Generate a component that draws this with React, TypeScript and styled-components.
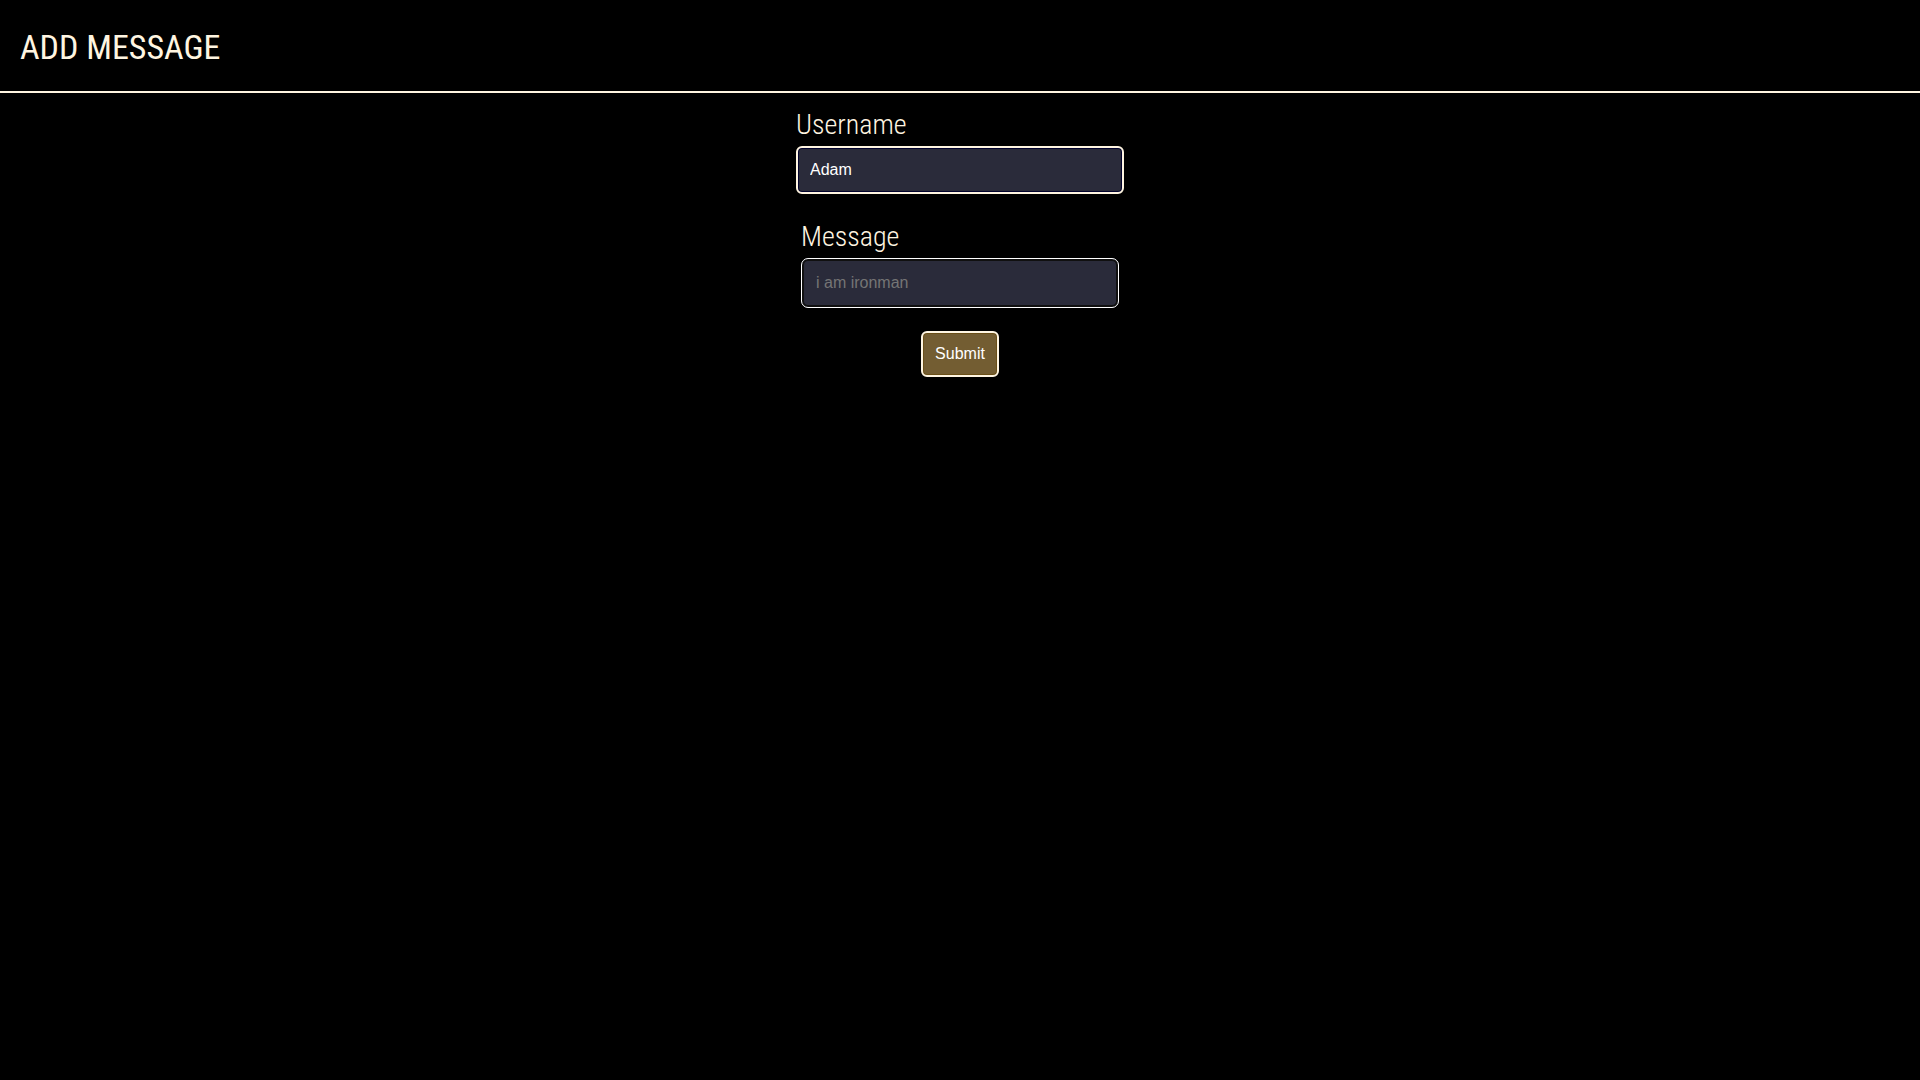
import React, { useState } from "react";
import styled, { createGlobalStyle } from "styled-components";

const cream = "#fff5e1";
const display = '"Roboto Condensed", Roboto, "Liberation Sans", sans-serif';

const GlobalStyle = createGlobalStyle`
  *, *::before, *::after {
    box-sizing: border-box;
  }

  body {
    margin: 0;
    background: #000;
    color: ${cream};
    font-family: "Liberation Sans", Arial, sans-serif;
    font-size: 16px;
  }
`;

const Header = styled.header`
  padding: 21px 20px 18px;
  border-bottom: 2px solid ${cream};
`;

const Title = styled.h1`
  margin: 0;
  font-family: ${display};
  font-size: 34px;
  font-weight: 400;
  line-height: 52px;
`;

const Form = styled.form`
  display: flex;
  flex-direction: column;
  align-items: center;
  gap: 23px;
  padding: 12px 20px;
`;

const Field = styled.div<{ $width: number }>`
  display: flex;
  flex-direction: column;
  gap: 1px;
  width: 100%;
  max-width: ${({ $width }) => $width}px;
`;

const Label = styled.label`
  font-family: ${display};
  font-size: 28px;
  font-weight: 300;
  line-height: 40px;
`;

const TextInput = styled.input<{ $outlined?: boolean }>`
  width: 100%;
  height: ${({ $outlined }) => ($outlined ? 50 : 48)}px;
  padding: 0 ${({ $outlined }) => ($outlined ? 14 : 12)}px;
  border: ${({ $outlined }) => ($outlined ? "1px solid #fff" : `2px solid ${cream}`)};
  border-radius: ${({ $outlined }) => ($outlined ? 7 : 6)}px;
  box-shadow: inset 0 0 0
    ${({ $outlined }) => ($outlined ? "2px #101010" : "1px #02022c")};
  background: #2a2b3a;
  color: #fff;
  font: inherit;
  outline: none;

  &::placeholder {
    color: #757575;
    opacity: 1;
  }
`;

const SubmitButton = styled.button`
  padding: 12px;
  border: 2px solid ${cream};
  border-radius: 6px;
  background: #735d32;
  box-shadow: inset 0 0 0 1px #6a4f17;
  color: #fff;
  font: inherit;
  line-height: 18px;
  cursor: pointer;
`;

export default function App() {
  const [username, setUsername] = useState("Adam");
  const [message, setMessage] = useState("");

  return (
    <>
      <GlobalStyle />
      <Header>
        <Title>ADD MESSAGE</Title>
      </Header>
      <main>
        <Form onSubmit={(event) => event.preventDefault()}>
          <Field $width={328}>
            <Label htmlFor="username">Username</Label>
            <TextInput
              id="username"
              type="text"
              value={username}
              onChange={(event) => setUsername(event.target.value)}
            />
          </Field>
          <Field $width={318}>
            <Label htmlFor="message">Message</Label>
            <TextInput
              id="message"
              type="text"
              placeholder="i am ironman"
              $outlined
              value={message}
              onChange={(event) => setMessage(event.target.value)}
            />
          </Field>
          <SubmitButton type="submit">Submit</SubmitButton>
        </Form>
      </main>
    </>
  );
}
